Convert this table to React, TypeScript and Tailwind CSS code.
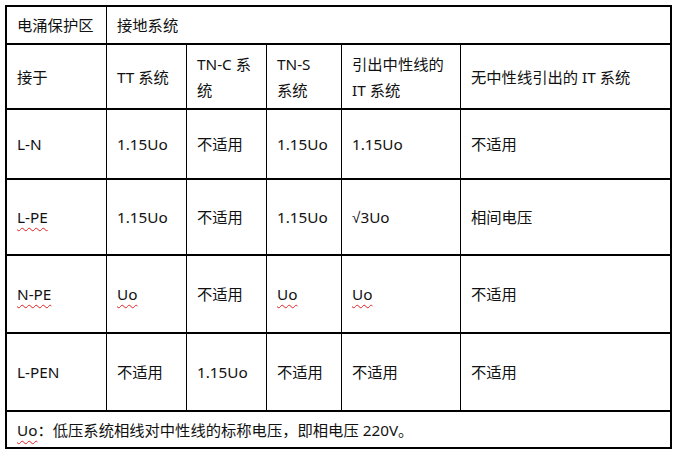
import React from 'react';

type Cell = { text: React.ReactNode; span?: string };

// spell-check style red wavy underline seen under some cells
function Squiggle({ children }: { children: React.ReactNode }) {
  return (
    <span className="underline decoration-wavy decoration-[#e02020] decoration-1 underline-offset-[4px]">
      {children}
    </span>
  );
}

const rows: Cell[][] = [
  [{ text: '电涌保护区' }, { text: '接地系统', span: 'col-span-5' }],
  [
    { text: '接于' },
    { text: 'TT 系统' },
    { text: <>TN-C 系<br />统</> },
    { text: <>TN-S<br />系统</> },
    { text: <>引出中性线的<br />IT 系统</> },
    { text: '无中性线引出的 IT 系统' },
  ],
  [
    { text: 'L-N' },
    { text: '1.15Uo' },
    { text: '不适用' },
    { text: '1.15Uo' },
    { text: '1.15Uo' },
    { text: '不适用' },
  ],
  [
    { text: <Squiggle>L-PE</Squiggle> },
    { text: '1.15Uo' },
    { text: '不适用' },
    { text: '1.15Uo' },
    {
      text: (
        <>
          <span style={{ fontFamily: '"Liberation Sans", sans-serif' }}>√</span>3Uo
        </>
      ),
    },
    { text: '相间电压' },
  ],
  [
    { text: <Squiggle>N-PE</Squiggle> },
    { text: <Squiggle>Uo</Squiggle> },
    { text: '不适用' },
    { text: <Squiggle>Uo</Squiggle> },
    { text: <Squiggle>Uo</Squiggle> },
    { text: '不适用' },
  ],
  [
    { text: 'L-PEN' },
    { text: '不适用' },
    { text: '1.15Uo' },
    { text: '不适用' },
    { text: '不适用' },
    { text: '不适用' },
  ],
  [
    {
      text: (
        <>
          <Squiggle>Uo</Squiggle>：低压系统相线对中性线的标称电压，即相电压 220V。
        </>
      ),
      span: 'col-span-6',
    },
  ],
];

export default function App() {
  return (
    <div
      className="w-[675px] h-[456px] bg-white pl-[5px] pt-[5px] text-[15.3px] text-[#111]"
      style={{ fontFamily: '"Noto Sans", "Noto Sans CJK SC", sans-serif' }}
    >
      <div className="grid w-[667px] grid-cols-[99px_79px_79px_74px_118px_209px] grid-rows-[36px_63px_68px_74px_76px_76px_35px] gap-x-px gap-y-[2px] bg-black p-[2px]">
        {rows.map((row, i) =>
          row.map((cell, j) => (
            <div
              key={`${i}-${j}`}
              className={`flex items-center bg-white pl-[10px] leading-[26px] whitespace-nowrap ${cell.span ?? ''}`}
            >
              <div>{cell.text}</div>
            </div>
          ))
        )}
      </div>
    </div>
  );
}
